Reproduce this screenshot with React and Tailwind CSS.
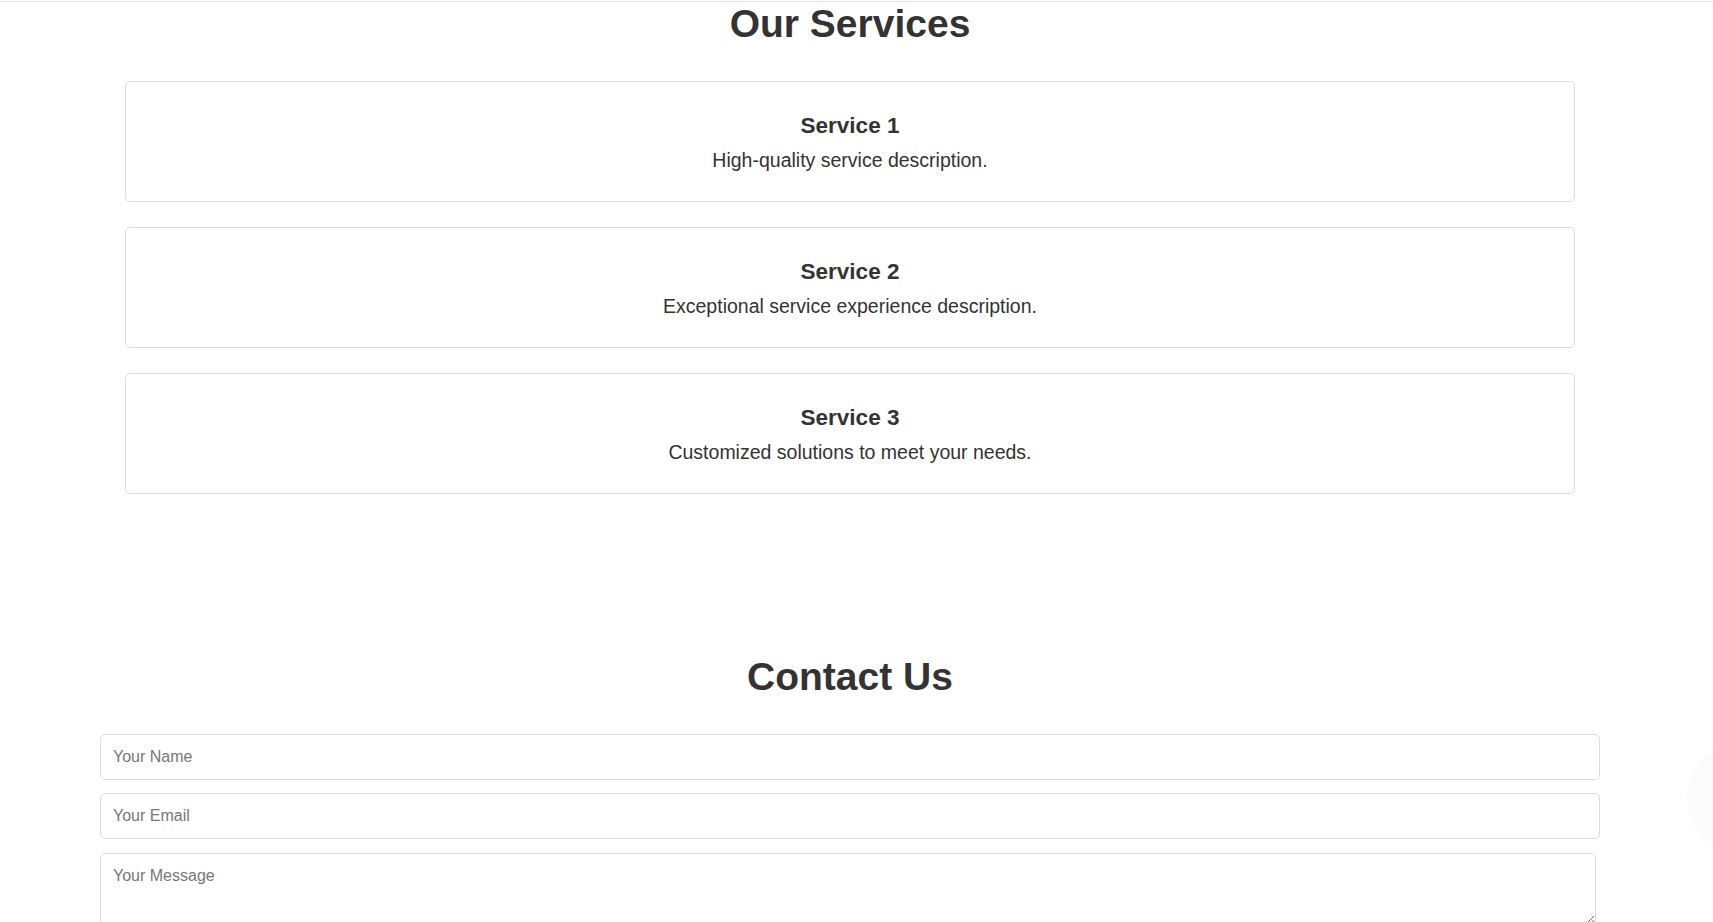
import React from 'react';

const services = [
  { title: 'Service 1', text: 'High-quality service description.' },
  { title: 'Service 2', text: 'Exceptional service experience description.' },
  { title: 'Service 3', text: 'Customized solutions to meet your needs.' },
];

const ServiceCard = ({ title, text }) => (
  <div className="bg-white border border-[#dcdcdc] rounded-[5px] pt-[31px] pb-[29px] text-center">
    <h3 className="text-[22.5px] font-bold leading-[26px] text-[#333]">{title}</h3>
    <p className="mt-[10px] text-[19.5px] leading-[23px] text-[#333]">{text}</p>
  </div>
);

const App = () => {
  return (
    <div className="relative min-h-screen bg-white font-['Liberation_Sans',Arial,sans-serif] text-[#333]">
      <div className="h-[2px] border-b border-[#e6e6e6]"></div>

      <div className="w-[1700px]">
        {/* Services */}
        <section>
          <h2 className="text-center text-[39px] font-bold leading-[44px]">Our Services</h2>
          <div className="mx-[125px] mt-[35px] flex flex-col gap-[25px]">
            {services.map((s) => (
              <ServiceCard key={s.title} title={s.title} text={s.text} />
            ))}
          </div>
        </section>

        {/* Contact */}
        <section className="pt-[162px]">
          <h2 className="text-center text-[39px] font-bold leading-[42px]">Contact Us</h2>
          <form className="mt-[36px] ml-[100px] w-[1500px] flex flex-col gap-[13px]" onSubmit={(e) => e.preventDefault()}>
            <input
              type="text"
              placeholder="Your Name"
              className="h-[46px] w-full px-[12px] border border-[#dcdcdc] rounded-[5px] text-[16px] text-[#333] placeholder:text-[#777] outline-none"
            />
            <input
              type="email"
              placeholder="Your Email"
              className="h-[46px] w-full px-[12px] border border-[#dcdcdc] rounded-[5px] text-[16px] text-[#333] placeholder:text-[#777] outline-none"
            />
            <textarea
              placeholder="Your Message"
              className="mt-[1px] h-[72px] w-[1496px] px-[12px] pt-[10px] pb-[12px] border border-[#dcdcdc] rounded-[5px] text-[16px] text-[#333] placeholder:text-[#777] outline-none resize-y"
            ></textarea>
          </form>
        </section>
      </div>

      {/* faint floating button at the right edge */}
      <div className="fixed left-[1687px] top-[742px] w-[112px] h-[112px] rounded-full bg-[#fbfbfb]"></div>
    </div>
  );
};

export default App;
